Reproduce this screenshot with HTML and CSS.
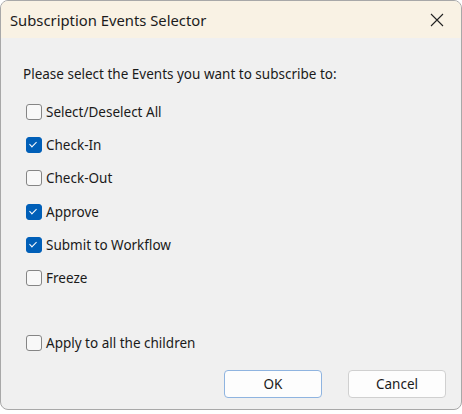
FILE: index.html
```html
<!DOCTYPE html>
<html lang="en">
<head>
  <meta charset="UTF-8">
  <title>Subscription Events Selector</title>
  <link rel="stylesheet" href="styles.css">
</head>
<body>
  <div class="window">
    <div class="titlebar">
      <span class="title">Subscription Events Selector</span>
      <svg class="close" width="14" height="14" viewBox="0 0 14 14">
        <path d="M1 1 L13 13 M13 1 L1 13" stroke="#222" stroke-width="1.1" fill="none"/>
      </svg>
    </div>
    <div class="content">
      <div class="prompt">Please select the Events you want to subscribe to:</div>
      <div class="events">
        <label class="check"><span class="box"></span>Select/Deselect All</label>
        <label class="check on"><span class="box"></span>Check-In</label>
        <label class="check"><span class="box"></span>Check-Out</label>
        <label class="check on"><span class="box"></span>Approve</label>
        <label class="check on"><span class="box"></span>Submit to Workflow</label>
        <label class="check"><span class="box"></span>Freeze</label>
      </div>
      <label class="check children"><span class="box"></span>Apply to all the children</label>
      <div class="buttons">
        <button class="btn default">OK</button>
        <button class="btn">Cancel</button>
      </div>
    </div>
  </div>
</body>
</html>
```

FILE: styles.css
```css
body {
  margin: 0;
  background: #fff;
  font-family: "Noto Sans", "Open Sans", sans-serif;
  color: #1a1a1a;
}

.window {
  width: 460px;
  height: 408px;
  border: 1px solid #a8a8a8;
  border-radius: 8px;
  overflow: hidden;
  background: #f0f0f0;
}

.titlebar {
  height: 37px;
  background: #f9f2e4;
  display: flex;
  align-items: center;
  justify-content: space-between;
  padding: 0 17px 0 9px;
}

.title {
  font-size: 14.8px;
  color: #1c1c1c;
}

.content {
  padding: 26px 0 0 22px;
  font-size: 13.5px;
}

.prompt {
  line-height: 20px;
  margin-bottom: 18px;
}

.events {
  display: flex;
  flex-direction: column;
  gap: 13.2px;
}

.check {
  display: flex;
  align-items: center;
  height: 20px;
  padding-left: 3px;
}

.box {
  width: 14px;
  height: 14px;
  border: 1px solid #858585;
  border-radius: 3px;
  background: #f8f8f8;
  margin-right: 4px;
  position: relative;
}

.check.on .box {
  background: #005fb8;
  border-color: #005fb8;
}

.check.on .box::after {
  content: "";
  position: absolute;
  left: 4px;
  top: 2px;
  width: 3px;
  height: 6px;
  border: solid #fff;
  border-width: 0 1.3px 1.3px 0;
  transform: rotate(45deg);
}

.children {
  margin-top: 45px;
}

.buttons {
  display: flex;
  justify-content: flex-end;
  gap: 26px;
  margin-top: 17px;
  padding-right: 15px;
}

.btn {
  width: 98px;
  height: 28px;
  font-family: inherit;
  font-size: 13.5px;
  color: #1a1a1a;
  background: #fdfdfd;
  border: 1px solid #d0d0d0;
  border-radius: 4px;
}

.btn.default {
  border-color: #8fb4e0;
}
```
